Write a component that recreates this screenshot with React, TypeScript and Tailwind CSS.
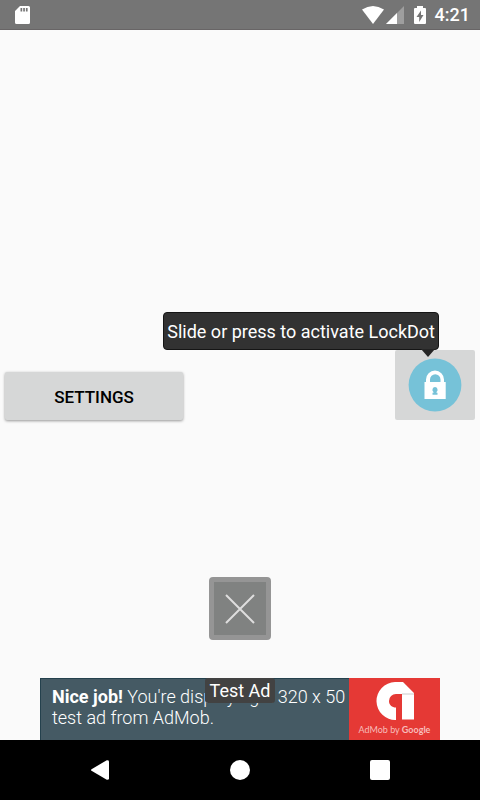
import React from "react";

const StatusBar = () => {
  return (
    <header className="flex h-[30px] items-center justify-between border-b border-[#686566] bg-[#757575] pr-[10px] pl-[15px] text-white">
      <svg className="h-[18px] w-[15px]" viewBox="0 0 15 18" aria-hidden="true">
        <path
          fill="#fff"
          fillRule="evenodd"
          d="M5 0h8.500a1.500 1.500 0 0 1 1.500 1.500v15a1.500 1.500 0 0 1-1.500 1.500h-12A1.500 1.500 0 0 1 0 16.500V5zM5.500 2v3.500h1.700v-3.500zm2.700 0v3.500h1.700v-3.500zm2.700 0v3.500h1.700v-3.500z"
        />
      </svg>
      <div className="flex items-center">
        <svg
          className="h-[18px] w-[22px]"
          viewBox="0 0 22 18"
          aria-hidden="true"
        >
          <path fill="#fff" d="M0 3.500Q11-3.500 22 3.500L11 18z" />
        </svg>
        <svg
          className="ml-[2px] h-[18px] w-[18px]"
          viewBox="0 0 18 18"
          aria-hidden="true"
        >
          <path fill="#fff" fillOpacity="0.3" d="M18 0v18H0z" />
          <path fill="#fff" d="M11 7v11H0z" />
        </svg>
        <svg
          className="ml-[10px] h-[18px] w-[12px]"
          viewBox="0 0 12 18"
          aria-hidden="true"
        >
          <path
            fill="#fff"
            fillRule="evenodd"
            d="M3 0h6v2h2a1 1 0 0 1 1 1v14a1 1 0 0 1-1 1H1a1 1 0 0 1-1-1V3a1 1 0 0 1 1-1h2zM7 4.500l-4.500 6.500h2.700v5l4.300-7H7z"
          />
        </svg>
        <span className="ml-[9px] text-[18px] leading-[30px] font-medium">
          4:21
        </span>
      </div>
    </header>
  );
};

const LockButton = () => {
  return (
    <div className="relative">
      <button
        type="button"
        aria-label="Activate LockDot"
        aria-describedby="lock-tip"
        className="flex h-[70px] w-[80px] items-center justify-center rounded-[2px] bg-[#d6d7d7]"
      >
        <svg className="h-[54px] w-[54px]" viewBox="0 0 54 54">
          <circle cx="27" cy="27" r="26.400" fill="#76c2d8" />
          <path
            fill="#fff"
            fillRule="evenodd"
            d="M16.500 24h1.500v-2.500a9 9 0 0 1 18 0v2.500h1.700v17H16.500zM22 24h10.500v-2.500a5.250 5.250 0 0 0-10.500 0zM27 29a2.800 2.800 0 0 0-1.500 5v.7h-1v2h5v-2h-1V34A2.800 2.800 0 0 0 27 29z"
          />
        </svg>
      </button>

      {/* Tooltip */}
      <div
        id="lock-tip"
        role="tooltip"
        className="absolute right-9 bottom-full h-[38px] rounded-[4px] border border-[#151515] bg-[#323232] px-[3px] text-[18px] leading-[38px] whitespace-nowrap text-white"
      >
        Slide or press to activate LockDot
        <svg
          className="absolute top-full right-[3px] h-[8px] w-[14px]"
          viewBox="0 0 14 8"
          aria-hidden="true"
        >
          <path fill="#252525" d="M0 0h14L7 8z" />
        </svg>
      </div>
    </div>
  );
};

const AdBanner = () => {
  return (
    <div className="relative mx-10">
      <a href="#" className="flex h-[62px] bg-[#455a64] text-white">
        <p className="flex-1 border-t border-l border-[#24414d] pt-[7px] pl-[11px] text-[18px] leading-[21px] font-light">
          <strong className="font-bold">Nice job!</strong> You're displaying a
          320 x 50 test ad from AdMob.
        </p>
        <div className="flex w-[91px] shrink-0 flex-col items-center bg-[#e53935] pt-1">
          <svg
            className="h-[38px] w-[38px]"
            viewBox="0 0 38 38"
            aria-hidden="true"
          >
            <path
              fill="#fff"
              d="M19 0h8l11 11v26.500H26V12h-6a7 7 0 0 0-7 7c0 4 3 6.500 7 6.500V38A19 19 0 0 1 19 0z"
            />
            <path stroke="#ccc" strokeWidth="1" d="M26 12h12" />
          </svg>
          <span className="font-[Lato,sans-serif] text-[9px] leading-[20px] text-[#f7bdbb]">
            AdMob by <b className="font-bold">Google</b>
          </span>
        </div>
      </a>
      <span className="absolute top-0 left-1/2 h-[25px] w-[70px] -translate-x-1/2 rounded-[3px] bg-[#424242] text-center text-[18px] leading-[26px] text-white">
        Test Ad
      </span>
    </div>
  );
};

const NavBar = () => {
  return (
    <nav className="flex h-[60px] items-center justify-center gap-[100px] bg-black">
      <button
        type="button"
        aria-label="Back"
        className="flex w-10 justify-center"
      >
        <svg className="h-5 w-5" viewBox="0 0 20 20">
          <path
            fill="#fff"
            d="M1.500 9.200 16.800.2Q19 0 19 1.500v17Q19 20 16.800 19.800L1.500 10.800Q.5 10 1.500 9.200z"
          />
        </svg>
      </button>
      <button
        type="button"
        aria-label="Home"
        className="flex w-10 justify-center"
      >
        <span className="h-5 w-5 rounded-full bg-white" />
      </button>
      <button
        type="button"
        aria-label="Recent apps"
        className="flex w-10 justify-center"
      >
        <span className="h-5 w-5 rounded-[2px] bg-white" />
      </button>
    </nav>
  );
};

const App = () => {
  return (
    <div className="flex min-h-screen flex-col bg-[#fafafa] font-[Roboto,sans-serif]">
      <StatusBar />

      <main className="flex flex-1 flex-col">
        <div className="flex flex-1 items-end justify-between px-[5px]">
          <button
            type="button"
            className="h-12 w-[178px] rounded-[2px] bg-[#d6d7d7] pt-[3px] text-[17px] font-medium text-black shadow-[0_1px_3px_rgba(0,0,0,0.4)]"
          >
            SETTINGS
          </button>
          <LockButton />
        </div>

        <div className="flex justify-center pt-[157px] pb-[38px]">
          <button
            type="button"
            aria-label="Close"
            className="flex h-[63px] w-[62px] items-center justify-center rounded-[4px] border-[5px] border-[#959595] bg-[#808281]"
          >
            <svg className="h-[30px] w-[30px]" viewBox="0 0 30 30">
              <path
                fill="none"
                stroke="#dedede"
                strokeWidth="2"
                d="M1 1l28 28M29 1L1 29"
              />
            </svg>
          </button>
        </div>

        <AdBanner />
      </main>

      <NavBar />
    </div>
  );
};

export default App;
